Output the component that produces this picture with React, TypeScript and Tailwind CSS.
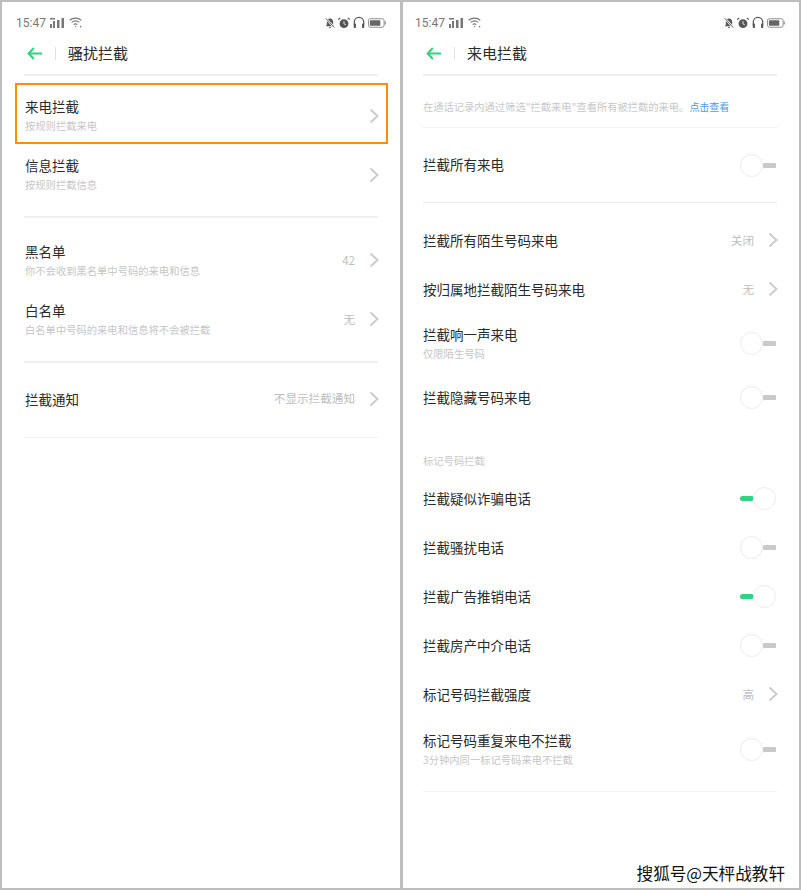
const cjk = "font-['Noto_Sans_CJK_SC','Noto_Sans',sans-serif]"

function Chevron() {
  return (
    <svg width="10" height="16" viewBox="0 0 10 16" fill="none" className="-mr-px shrink-0">
      <path d="M1.5 1.5 8.5 8 1.5 14.5" stroke="#cbcbcb" strokeWidth="1.9" />
    </svg>
  )
}

function Toggle({ on = false }: { on?: boolean }) {
  if (on) {
    return (
      <div className="flex w-[36px] shrink-0 items-center">
        <span className="h-[5px] w-[14px] rounded-full bg-[#2ed47f]" />
        <span className="h-[23px] w-[23px] -ml-px rounded-full border border-[#ececec] bg-white" />
      </div>
    )
  }
  return (
    <div className="flex w-[36px] shrink-0 items-center">
      <span className="h-[23px] w-[23px] rounded-full border border-[#ececec] bg-white" />
      <span className="h-[5px] w-[13px] rounded-[1px] bg-[#c9c9c9]" />
    </div>
  )
}

function StatusBar() {
  return (
    <div className="-mx-[8px] flex h-[39px] items-center justify-between pt-[2px]">
      <div className="flex items-center gap-[4px] text-[#777]">
        <span className="font-['Roboto',sans-serif] text-[12px] leading-none">15:47</span>
        <svg width="15" height="10" viewBox="0 0 15 10" fill="#777">
          <rect x="0" y="6" width="2" height="4" />
          <rect x="3" y="3" width="2" height="7" />
          <rect x="7" y="2" width="2.5" height="8" />
          <rect x="11.5" y="0" width="2.5" height="10" />
          <rect x="0" y="0" width="5" height="1.5" />
        </svg>
        <svg width="13" height="11" viewBox="0 0 13 11" fill="none" stroke="#777" strokeWidth="1.2">
          <path d="M.7 3.2C4 .3 9 .3 12.3 3.2" />
          <path d="M2.7 5.4C4.9 3.6 8.1 3.6 10.3 5.4" />
          <path d="M4.7 7.5C5.8 6.7 7.2 6.7 8.3 7.5" />
          <circle cx="6.5" cy="9.6" r=".7" fill="#777" stroke="none" />
          <rect x="11" y="8.8" width="1.2" height="1.6" fill="#777" stroke="none" />
        </svg>
      </div>
      <div className="flex items-center gap-[3px]">
        <svg width="10" height="12" viewBox="0 0 11 12" fill="#555">
          <path d="M5.5 1C8 1 9 3 9 5v3l1 1.5H1L2 8V5c0-2 1-4 3.5-4zM4.2 10.3h2.6L5.5 12z" />
          <path d="M.8.8 10.2 11" stroke="#fff" strokeWidth="2.2" />
          <path d="M.8.8 10.2 11" stroke="#555" strokeWidth="1" />
        </svg>
        <svg width="12" height="12" viewBox="0 0 13 12" fill="#555">
          <circle cx="6.5" cy="6.7" r="4.8" />
          <path d="M.6 3 3 .7 1.6.2 0 1.6zM12.4 3 10 .7l1.4-.5L13 1.6z" />
          <path d="M6.5 4v3l2 1" stroke="#fff" strokeWidth=".9" fill="none" />
        </svg>
        <svg width="12" height="13" viewBox="0 0 13 13" fill="none" stroke="#555" strokeWidth="1.3">
          <path d="M1.4 8.5V6a5.1 5.1 0 0 1 10.2 0v2.5" />
          <rect x=".8" y="7.6" width="2.4" height="4.8" rx=".8" fill="#555" stroke="none" />
          <rect x="9.8" y="7.6" width="2.4" height="4.8" rx=".8" fill="#555" stroke="none" />
        </svg>
        <svg width="18" height="10" viewBox="0 0 19 10" fill="none">
          <rect x=".5" y=".5" width="16.5" height="9" rx="2" stroke="#888" />
          <rect x="2" y="2" width="11" height="6" rx="1" fill="#666" />
          <rect x="17.6" y="3.5" width="1.2" height="3" fill="#888" />
        </svg>
      </div>
    </div>
  )
}

function Header({ title }: { title: string }) {
  return (
    <div className="flex h-[24px] items-center pl-[3px]">
      <svg width="15" height="13" viewBox="0 0 15 13" fill="none" stroke="#2ed47f" strokeWidth="2">
        <path d="M6.8 1 1.6 6.5l5.2 5.5M2 6.5h13" />
      </svg>
      <span className="ml-[13px] h-[13px] w-px bg-[#e3e3e3]" />
      <span className="ml-[12px] pb-[2px] text-[15px] leading-none text-[#2a2a2a]">{title}</span>
    </div>
  )
}

function Line({ className }: { className: string }) {
  return <div className={className} />
}

function NavRow({ title, sub, value, h = 'h-[59px]', inset = 'pl-[1px]' }: { title: string; sub?: string; value?: string; h?: string; inset?: string }) {
  return (
    <div className={`flex items-center justify-between ${h} ${inset}`}>
      <div className={inset ? '' : 'pb-[2px]'}>
        <p className="text-[13.5px] leading-[20px] text-[#2a2a2a]">{title}</p>
        {sub && <p className="text-[10.3px] leading-[20px] text-[#c6c6c6]">{sub}</p>}
      </div>
      <div className="flex items-center gap-[14px]">
        {value && <span className="text-[11.6px] text-[#bdbdbd]">{value}</span>}
        <Chevron />
      </div>
    </div>
  )
}

function ToggleRow({ title, sub, on, h = 'h-[49px]' }: { title: string; sub?: string; on?: boolean; h?: string }) {
  return (
    <div className={`flex items-center justify-between pr-[1px] ${h}`}>
      <div className={sub ? '' : 'pb-[2px]'}>
        <p className="text-[13.5px] leading-[20px] text-[#2a2a2a]">{title}</p>
        {sub && <p className="text-[10.3px] leading-[19px] text-[#c6c6c6]">{sub}</p>}
      </div>
      <Toggle on={on} />
    </div>
  )
}

export default function App() {
  return (
    <div className={`relative flex h-[890px] w-[801px] gap-[3px] bg-[#bdbdbd] p-[2px] ${cjk}`}>
      {/* Left phone */}
      <div className="relative w-[398px] bg-white pl-[22px] pr-[22px]">
        <StatusBar />
        <Header title="骚扰拦截" />
        <Line className="mt-[9px] h-[2px] bg-[#f0f0f0]" />
        <div className="mt-[10px]">
          <NavRow title="来电拦截" sub="按规则拦截来电" />
          <NavRow title="信息拦截" sub="按规则拦截信息" />
        </div>
        <Line className="mt-[12px] h-[2px] bg-[#f0f0f0]" />
        <div className="mt-[13px]">
          <NavRow title="黑名单" sub="你不会收到黑名单中号码的来电和信息" value="42" />
          <NavRow title="白名单" sub="白名单中号码的来电和信息将不会被拦截" value="无" />
        </div>
        <Line className="mt-[12px] h-[2px] bg-[#f0f0f0]" />
        <NavRow title="拦截通知" value="不显示拦截通知" h="h-[72px]" />
        <Line className="mt-[2px] h-px bg-[#f4f4f4]" />
        {/* orange highlight drawn over the first row */}
        <div className="absolute left-[13px] top-[81px] h-[61px] w-[373px] border-2 border-[#f98f05]" />
      </div>

      {/* Right phone */}
      <div className="w-[396px] bg-white pl-[20px] pr-[22px]">
        <StatusBar />
        <Header title="来电拦截" />
        <Line className="mt-[9px] h-[2px] bg-[#f0f0f0]" />
        <p className="mt-[23px] text-[10.28px] leading-[16px] whitespace-nowrap text-[#c8c8c8]">
          在通话记录内通过筛选"拦截来电"查看所有被拦截的来电。<span className="text-[10px] text-[#4a9bea]">点击查看</span>
        </p>
        <Line className="mt-[12px] h-px bg-[#f2f2f2]" />
        <ToggleRow title="拦截所有来电" h="h-[74px]" />
        <Line className="h-px bg-[#ececec]" />
        <div className="mt-[13px]">
          <NavRow title="拦截所有陌生号码来电" value="关闭" h="h-[49px]" inset="" />
          <NavRow title="按归属地拦截陌生号码来电" value="无" h="h-[49px]" inset="" />
          <ToggleRow title="拦截响一声来电" sub="仅限陌生号码" h="h-[59px]" />
          <ToggleRow title="拦截隐藏号码来电" />
        </div>
        <p className="mt-[31px] text-[10.3px] leading-[16px] text-[#c8c8c8]">标记号码拦截</p>
        <div className="mt-[5px]">
          <ToggleRow title="拦截疑似诈骗电话" on />
          <ToggleRow title="拦截骚扰电话" />
          <ToggleRow title="拦截广告推销电话" on />
          <ToggleRow title="拦截房产中介电话" />
          <NavRow title="标记号码拦截强度" value="高" h="h-[49px]" inset="" />
          <ToggleRow title="标记号码重复来电不拦截" sub="3分钟内同一标记号码来电不拦截" h="h-[60px]" />
        </div>
        <Line className="mt-[12px] h-px bg-[#f4f4f4]" />
      </div>

      {/* watermark sits on top of the screenshot */}
      <span className="absolute bottom-[5px] right-[16px] text-[16.6px] leading-[24px] text-[#111] [text-shadow:0_0_2px_#fff]">
        搜狐号@天枰战教轩
      </span>
    </div>
  )
}
